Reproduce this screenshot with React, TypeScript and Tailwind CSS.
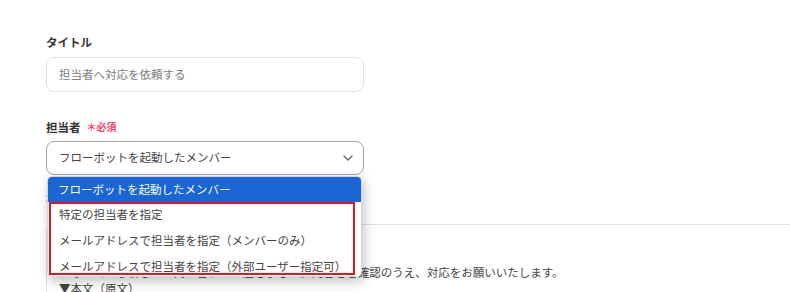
import React from "react";

const options = [
  "特定の担当者を指定",
  "メールアドレスで担当者を指定（メンバーのみ）",
  "メールアドレスで担当者を指定（外部ユーザー指定可）",
];

export default function App() {
  return (
    <div className="relative w-[790px] h-[292px] overflow-hidden bg-white font-['Noto_Sans_CJK_JP','Noto_Sans',sans-serif] text-[#333]">
      <div className="pl-[46px] pt-[33px]">
        <div className="text-[11.5px] font-bold leading-[18px]">タイトル</div>
        <div className="mt-[6px] w-[318px] h-[35px] rounded-[8px] border border-[#dfe2e6] flex items-center px-[12px] text-[11.5px] text-[#7d7d7d]">
          担当者へ対応を依頼する
        </div>

        <div className="mt-[26px] flex items-center gap-[6px] leading-[18px]">
          <span className="text-[11.5px] font-bold">担当者</span>
          <span className="text-[10px] text-[#ef4566] font-bold">＊必須</span>
        </div>
        <div className="mt-[5px] w-[318px] h-[34px] rounded-[8px] border border-[#a6a6a6] flex items-center justify-between pl-[12px] pr-[10px] text-[11.5px] text-[#444]">
          <span>フローボットを起動したメンバー</span>
          <svg width="10" height="6" viewBox="0 0 10 6" fill="none" aria-hidden>
            <path d="M1 1l4 4 4-4" stroke="#666" strokeWidth="1.4" strokeLinecap="round" strokeLinejoin="round" />
          </svg>
        </div>

        {/* content behind the open menu */}
        <div className="mt-[14px] text-[11.5px] font-bold leading-[18px]">本文</div>
        <div className="mt-[17px] w-[800px] h-[80px] rounded-tl-[8px] border border-[#dcdfe3] pl-[12px] pt-[7px] text-[11.5px] leading-[16px] text-[#444]">
          <div>{"{{担当者名}}"} 様</div>
          <div>&nbsp;</div>
          <div>フォームから新しいお問い合わせが届きました。内容をご確認のうえ、対応をお願いいたします。</div>
          <div>▼本文（原文）</div>
        </div>
      </div>

      {/* open dropdown */}
      <div className="absolute left-[47px] top-[176px] w-[315px] h-[101px] rounded-[5px] bg-white border border-[#d6d6d6] shadow-[2px_4px_12px_rgba(0,0,0,0.25)] overflow-hidden text-[11.5px]">
        <div className="h-[25px] bg-[#1a66d4] text-white flex items-center pl-[10px]">
          フローボットを起動したメンバー
        </div>
        <div className="ml-[1px] w-[306px] h-[73px] border-[2px] border-[#e3141f] pl-[8px] text-[#444]">
          <div className="-mt-[3px]">
            {options.map((o) => (
              <div key={o} className="leading-[26px]">
                {o}
              </div>
            ))}
          </div>
        </div>
      </div>
    </div>
  );
}
